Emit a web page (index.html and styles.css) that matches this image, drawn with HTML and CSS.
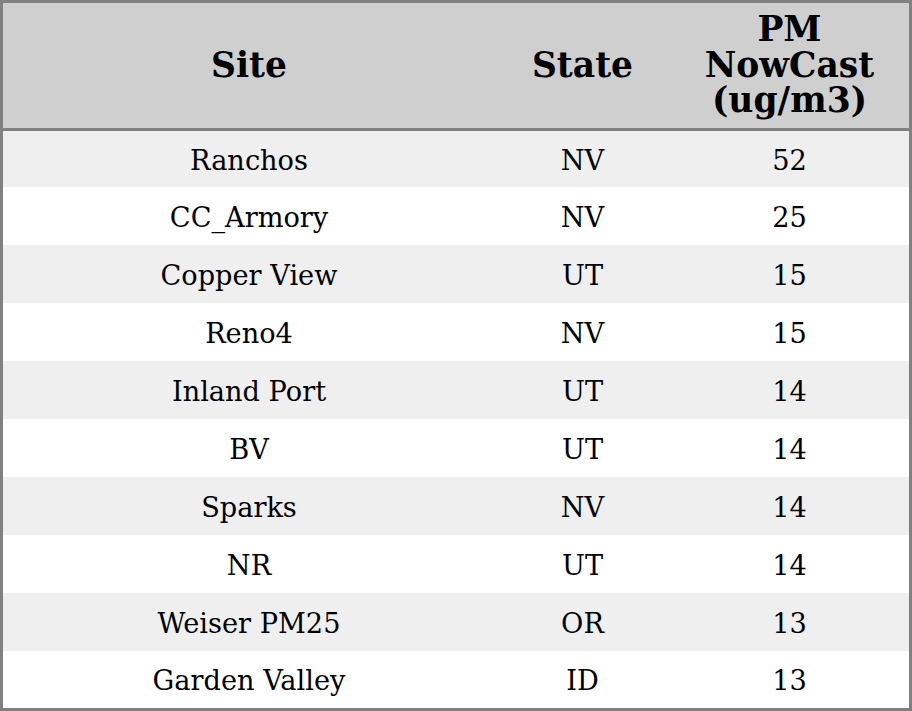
FILE: index.html
```html
<!DOCTYPE html>
<html>
<head>
<meta charset="utf-8">
<link rel="stylesheet" href="styles.css">
</head>
<body>
<table class="aq-table">
  <colgroup>
    <col class="col-site">
    <col class="col-state">
    <col class="col-pm">
  </colgroup>
  <thead>
    <tr>
      <th>Site</th>
      <th>State</th>
      <th>PM<br>NowCast<br>(ug/m3)</th>
    </tr>
  </thead>
  <tbody>
    <tr><td>Ranchos</td><td>NV</td><td>52</td></tr>
    <tr><td>CC_Armory</td><td>NV</td><td>25</td></tr>
    <tr><td>Copper View</td><td>UT</td><td>15</td></tr>
    <tr><td>Reno4</td><td>NV</td><td>15</td></tr>
    <tr><td>Inland Port</td><td>UT</td><td>14</td></tr>
    <tr><td>BV</td><td>UT</td><td>14</td></tr>
    <tr><td>Sparks</td><td>NV</td><td>14</td></tr>
    <tr><td>NR</td><td>UT</td><td>14</td></tr>
    <tr><td>Weiser PM25</td><td>OR</td><td>13</td></tr>
    <tr><td>Garden Valley</td><td>ID</td><td>13</td></tr>
  </tbody>
</table>
</body>
</html>
```

FILE: styles.css
```css
html, body {
  margin: 0;
  padding: 0;
  background: #ffffff;
}

.aq-table {
  box-sizing: border-box;
  width: 912px;
  height: 711px;
  table-layout: fixed;
  border-collapse: separate;
  border-spacing: 0;
  border: 3px solid #808080;
  font-family: "DejaVu Serif", serif;
  color: #000;
}

.col-site { width: 492px; }
.col-state { width: 175px; }
.col-pm { width: 239px; }

.aq-table th {
  height: 125px;
  padding: 0;
  background: #cfcfcf;
  border-bottom: 3px solid #808080;
  font-size: 34.5px;
  font-weight: bold;
  line-height: 35.5px;
  text-align: center;
  vertical-align: middle;
}

.aq-table td {
  height: 56px;
  padding: 2px 0 0;
  font-size: 27.2px;
  text-align: center;
  vertical-align: middle;
}

.aq-table tbody tr:first-child td { height: 54px; }
.aq-table tbody tr:last-child td { height: 55px; }

.aq-table tbody tr:nth-child(odd) td { background: #efefef; }
.aq-table tbody tr:nth-child(even) td { background: #ffffff; }
```
